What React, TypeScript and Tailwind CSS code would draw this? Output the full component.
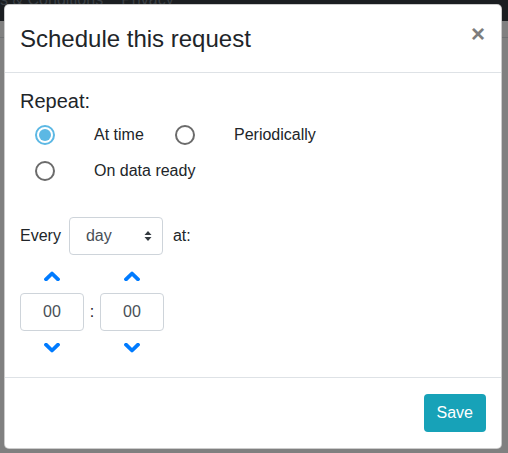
import React from "react";

function Radio({ checked }: { checked?: boolean }) {
  return (
    <span
      className={
        "flex h-[20px] w-[20px] shrink-0 items-center justify-center rounded-full border-2 " +
        (checked ? "border-[#5cb8e4]" : "border-[#6b6b6b]")
      }
    >
      {checked && <span className="h-[12px] w-[12px] rounded-full bg-[#5cb8e4]" />}
    </span>
  );
}

function Chevron({ up }: { up?: boolean }) {
  return (
    <svg width="16" height="10" viewBox="0 0 16 10" className="block">
      <polyline
        points={up ? "2,8.3 8,2.5 14,8.3" : "2,1.7 8,7.5 14,1.7"}
        fill="none"
        stroke="#007bff"
        strokeWidth="3.8"
        strokeLinecap="round"
        strokeLinejoin="round"
      />
    </svg>
  );
}

function TimeCol({ value }: { value: string }) {
  return (
    <div className="flex w-[64px] flex-col items-center">
      <div className="mt-[16px] h-[10px]">
        <Chevron up />
      </div>
      <div className="mt-[12px] flex h-[38px] w-[64px] items-center justify-center rounded-[4px] border border-[#ced4da] text-[16px] text-[#495057]">
        {value}
      </div>
      <div className="mt-[12px]">
        <Chevron />
      </div>
    </div>
  );
}

export default function App() {
  return (
    <div
      className="relative h-[453px] w-[508px] overflow-hidden bg-[#808080] text-[#212529]"
      style={{ fontFamily: '"Liberation Sans", Arial, sans-serif' }}
    >
      {/* page behind the backdrop */}
      <div className="h-[33px] bg-[#1b1e21]">
        <div className="-mt-[12px] flex gap-[18px] text-[16px] leading-[24px] text-[#3a3f44]">
          <span>s &amp; Conditions</span>
          <span>Privacy</span>
        </div>
      </div>
      <div className="mt-[16px] border-t border-[#6f7173]" />

      {/* modal */}
      <div className="absolute left-[4px] top-[4px] w-[498px] rounded-[5px] border border-black/20 bg-white">
        <div className="flex h-[68px] items-center border-b border-[#dee2e6] pl-[15px] pr-[16px]">
          <h4 className="text-[24px] leading-[36px]">Schedule this request</h4>
          <button className="ml-auto -mt-[10px] text-[24px] font-bold leading-none text-[#7d7d7d]">
            &times;
          </button>
        </div>

        <div className="h-[304px] px-[15px] pt-[16px]">
          <div className="text-[20px] leading-[24px]">Repeat:</div>
          <div className="mt-[4px] pl-[15px] text-[16px]">
            <div className="flex h-[36px] items-center">
              <div className="flex w-[140px] items-center">
                <Radio checked />
                <span className="ml-[39px]">At time</span>
              </div>
              <div className="flex items-center">
                <Radio />
                <span className="ml-[39px]">Periodically</span>
              </div>
            </div>
            <div className="flex h-[36px] items-center">
              <Radio />
              <span className="ml-[39px]">On data ready</span>
            </div>
          </div>

          <div className="mt-[28px] flex items-center text-[16px]">
            <span>Every</span>
            <div className="ml-[8px] flex h-[38px] w-[94px] items-center rounded-[4px] border border-[#ced4da] pl-[16px] pr-[10px] text-[#495057]">
              <span>day</span>
              <svg width="8" height="12" viewBox="0 0 8 12" className="ml-auto">
                <path d="M4 1 L7.5 5 H0.5 Z M4 11 L7.5 7 H0.5 Z" fill="#343a40" />
              </svg>
            </div>
            <span className="ml-[10px]">at:</span>
          </div>

          <div className="flex items-start">
            <TimeCol value="00" />
            <div className="mt-[38px] flex h-[38px] w-[16px] items-center justify-center text-[16px]">:</div>
            <TimeCol value="00" />
          </div>
        </div>

        <div className="flex h-[71px] items-center justify-end border-t border-[#dee2e6] px-[15px]">
          <button className="h-[38px] rounded-[4px] bg-[#17a2b8] px-[13px] text-[16px] text-white">
            Save
          </button>
        </div>
      </div>
    </div>
  );
}
